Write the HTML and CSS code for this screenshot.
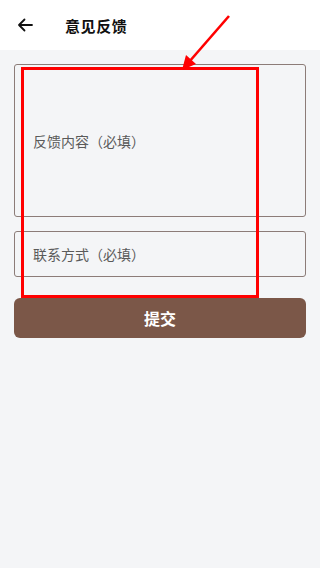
FILE: index.html
```html
<!DOCTYPE html>
<html lang="zh">
<head>
<meta charset="UTF-8">
<title>意见反馈</title>
<link rel="stylesheet" href="styles.css">
</head>
<body>
<div class="page">
  <header class="topbar">
    <span class="back">
      <svg width="16" height="14" viewBox="0 0 16 14"><path d="M15 7H2M7.5 1.5L2 7l5.5 5.5" fill="none" stroke="#111" stroke-width="1.8" stroke-linecap="round" stroke-linejoin="round"/></svg>
    </span>
    <h1>意见反馈</h1>
  </header>
  <main class="form">
    <div class="field field-area"><span class="hint">反馈内容（必填）</span></div>
    <div class="field field-line"><span class="hint">联系方式（必填）</span></div>
    <button class="submit">提交</button>
  </main>
  <!-- annotation -->
  <div class="mark-box"></div>
  <svg class="mark-arrow" width="320" height="80" viewBox="0 0 320 80">
    <line x1="229" y1="16" x2="189" y2="62" stroke="#f00" stroke-width="2.6"/>
    <polygon points="182,70 186,55 196,64" fill="#f00"/>
  </svg>
</div>
</body>
</html>
```

FILE: styles.css
```css
body {
  margin: 0;
  font-family: "Noto Sans CJK SC", "Noto Sans", sans-serif;
  background: #f4f5f7;
}
.page {
  position: relative;
  width: 320px;
  height: 568px;
  overflow: hidden;
}
.topbar {
  height: 50px;
  background: #fff;
  display: flex;
  align-items: center;
}
.back {
  width: 65px;
  padding-left: 17px;
  box-sizing: border-box;
  display: flex;
  align-items: center;
}
.topbar h1 {
  margin: 0;
  font-size: 15px;
  font-weight: bold;
  letter-spacing: 0.6px;
  color: #111;
}
.form {
  padding: 14px 14px 0 14px;
  display: flex;
  flex-direction: column;
}
.field {
  border: 1px solid #8c7c78;
  border-radius: 3px;
  display: flex;
  align-items: center;
  padding-left: 18px;
  box-sizing: border-box;
}
.field-area {
  height: 153px;
}
.field-line {
  height: 46px;
  margin-top: 14px;
}
.hint {
  font-size: 14px;
  color: #5a5a5a;
}
.submit {
  margin-top: 21px;
  height: 40px;
  border: none;
  border-radius: 6px;
  background: #7b5748;
  color: #fff;
  font-family: inherit;
  font-size: 16px;
  font-weight: bold;
}
.mark-box {
  position: absolute;
  left: 21px;
  top: 67px;
  width: 238px;
  height: 231px;
  border: 3px solid #f00;
  box-sizing: border-box;
}
.mark-arrow {
  position: absolute;
  left: 0;
  top: 0;
}
```
